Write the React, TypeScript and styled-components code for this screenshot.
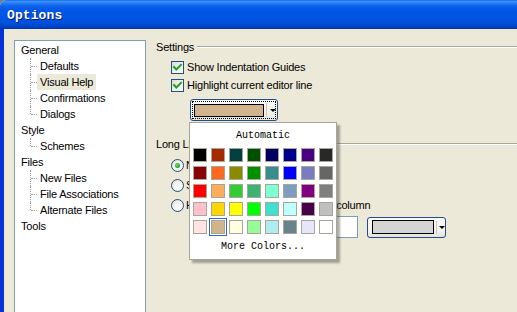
import React from "react";
import styled, { createGlobalStyle, css } from "styled-components";

const Global = createGlobalStyle`
  html, body { margin: 0; padding: 0; background: #7a7a7a; overflow: hidden; }
  #root { width: 517px; height: 312px; }
`;

const UI_FONT = `"Liberation Sans", Arial, sans-serif`;
const MONO_FONT = `"Liberation Mono", "Courier New", monospace`;

const Window = styled.div`
  width: 517px;
  height: 312px;
  display: flex;
  flex-direction: column;
  overflow: hidden;
  border-top-left-radius: 6px;
  background: #ece9d8;
`;

const TitleBar = styled.div`
  flex: none;
  height: 29px;
  display: flex;
  align-items: center;
  padding-left: 7px;
  padding-top: 1px;
  box-sizing: border-box;
  background: linear-gradient(
    to bottom,
    #0a5be6 0px,
    #3d95ff 1px,
    #2a80f6 3px,
    #0d63ea 6px,
    #0057e6 10px,
    #0054e3 18px,
    #0050dc 23px,
    #0046cc 26px,
    #0036ad 29px
  );
  color: #ffffff;
  font-family: ${MONO_FONT};
  font-weight: bold;
  font-size: 13px;
  letter-spacing: 0.1px;
  text-shadow: 1px 1px 0 #0a1c6a;
`;

const Body = styled.div`
  flex: 1;
  display: flex;
  gap: 10px;
  padding: 11px 0 0 10px;
  border-left: 4px solid #0855dd;
  border-image: linear-gradient(to right, #0831d9 0, #1b6bff 30%, #0c5ae8 60%, #0046d5 100%) 1;
  background: #ece9d8;
  min-height: 0;
`;

const Tree = styled.div`
  flex: none;
  width: 132px;
  height: 290px;
  box-sizing: border-box;
  border: 1px solid #7f9db9;
  background: #ffffff;
  padding-top: 1px;
  font-family: ${UI_FONT};
  font-size: 11px;
  letter-spacing: -0.2px;
  color: #000;
`;

const TreeRoot = styled.div`
  height: 16px;
  line-height: 16px;
  padding-left: 6px;
`;

const TreeChild = styled.div<{ $last?: boolean }>`
  position: relative;
  height: 16px;
  line-height: 16px;
  padding-left: 22px;
  &::before {
    content: "";
    position: absolute;
    left: 15px;
    top: 0;
    height: ${(p) => (p.$last ? "8px" : "16px")};
    border-left: 1px dotted #a0a0a0;
  }
  &::after {
    content: "";
    position: absolute;
    left: 16px;
    top: 8px;
    width: 6px;
    border-top: 1px dotted #a0a0a0;
  }
`;

const TreeLabel = styled.span<{ $selected?: boolean }>`
  display: inline-block;
  padding: 0 3px;
  height: 16px;
  ${(p) =>
    p.$selected &&
    css`
      background: #ece9d8;
    `}
`;

const Panel = styled.div`
  flex: 1;
  display: flex;
  flex-direction: column;
  font-family: ${UI_FONT};
  font-size: 11px;
  letter-spacing: -0.2px;
  color: #000;
  min-width: 0;
`;

const SectionHeader = styled.div<{ $mt?: number }>`
  display: flex;
  align-items: center;
  gap: 3px;
  height: 14px;
  margin-top: ${(p) => p.$mt ?? 0}px;
  white-space: nowrap;
`;

const Rule = styled.div`
  flex: 1;
  height: 0;
  border-top: 1px solid #aca899;
  border-bottom: 1px solid #ffffff;
`;

const OptionRow = styled.div<{ $h: number; $mt?: number }>`
  display: flex;
  align-items: center;
  gap: 3px;
  height: ${(p) => p.$h}px;
  margin-top: ${(p) => p.$mt ?? 0}px;
  padding-left: 15px;
  white-space: nowrap;
`;

const OptionText = styled.span<{ $spread?: number }>`
  word-spacing: ${(p) => p.$spread ?? 0}px;
`;

const CheckBox = styled.span`
  position: relative;
  flex: none;
  width: 13px;
  height: 13px;
  box-sizing: border-box;
  border: 1px solid #1c5180;
  background: linear-gradient(135deg, #dcdcd7 0%, #f4f4f0 60%, #ffffff 100%);
  svg {
    position: absolute;
    left: 0;
    top: 0;
  }
`;

const Radio = styled.span<{ $checked?: boolean }>`
  position: relative;
  flex: none;
  width: 13px;
  height: 13px;
  box-sizing: border-box;
  border: 1px solid #1c5180;
  border-radius: 50%;
  background: radial-gradient(circle at 65% 65%, #ffffff 0%, #f4f3ee 50%, #d8d7d0 100%);
  margin-right: -1px;
  ${(p) =>
    p.$checked &&
    css`
      &::after {
        content: "";
        position: absolute;
        left: 3px;
        top: 3px;
        width: 5px;
        height: 5px;
        border-radius: 50%;
        background: radial-gradient(circle at 40% 40%, #5fe35f 0%, #21a121 70%, #1a8a1a 100%);
      }
    `}
`;

const ComboWrap = styled.div<{ $mt?: number; $ml?: number }>`
  position: relative;
  align-self: flex-start;
  margin-top: ${(p) => p.$mt ?? 0}px;
  margin-left: ${(p) => p.$ml ?? 0}px;
`;

const ComboBox = styled.div<{ $w: number; $h: number; $focused?: boolean }>`
  position: relative;
  width: ${(p) => p.$w}px;
  height: ${(p) => p.$h}px;
  box-sizing: border-box;
  border: 1px solid #1f4e86;
  border-radius: 3px;
  background: linear-gradient(to bottom, #fbfbf9 0%, #f2f1ec 70%, #e4e2da 100%);
  display: flex;
  align-items: center;
  padding-left: 3px;
  ${(p) =>
    p.$focused &&
    css`
      &::after {
        content: "";
        position: absolute;
        inset: 1px;
        border: 1px dotted #000;
      }
    `}
`;

const ComboSwatch = styled.span<{ $w: number; $h: number; $ml?: number }>`
  flex: none;
  width: ${(p) => p.$w}px;
  height: ${(p) => p.$h}px;
  margin-left: ${(p) => p.$ml ?? 0}px;
  box-sizing: border-box;
  border: 1px solid #000;
`;

const ComboArrow = styled.span`
  flex: 1;
  align-self: stretch;
  display: flex;
  align-items: center;
  justify-content: center;
  margin: 3px 0 3px 2px;
  border-left: 1px solid #c8c6bc;
  &::after {
    content: "";
    width: 0;
    height: 0;
    border-left: 3px solid transparent;
    border-right: 3px solid transparent;
    border-top: 3px solid #000;
    margin-left: 1px;
  }
`;

const Popup = styled.div`
  position: absolute;
  left: -1px;
  top: 23px;
  z-index: 10;
  width: 148px;
  box-sizing: border-box;
  background: #ffffff;
  border: 1px solid #a8a69a;
  box-shadow: 3px 3px 2px rgba(70, 70, 60, 0.45);
  display: flex;
  flex-direction: column;
  align-items: stretch;
  font-family: ${MONO_FONT};
  font-size: 10px;
  letter-spacing: 0;
  color: #000;
`;

const PopupItem = styled.div<{ $h: number }>`
  height: ${(p) => p.$h}px;
  display: flex;
  align-items: center;
  justify-content: center;
`;

const SwatchGrid = styled.div`
  display: grid;
  grid-template-columns: repeat(8, 14px);
  grid-auto-rows: 14px;
  gap: 4px;
  padding: 0 3px;
`;

const Swatch = styled.span<{ $selected?: boolean }>`
  box-sizing: border-box;
  width: 14px;
  height: 14px;
  border: 1px solid #a8a69a;
  ${(p) =>
    p.$selected &&
    css`
      outline: 1px solid #316ac5;
      outline-offset: 1px;
    `}
`;

const FieldRow = styled.div`
  display: flex;
  align-items: center;
  gap: 9px;
  height: 22px;
  margin-top: 1px;
  padding-left: 34px;
  white-space: nowrap;
`;

const FieldLabel = styled.span`
  width: 99px;
  overflow: hidden;
`;

const TextField = styled.span`
  width: 60px;
  height: 22px;
  box-sizing: border-box;
  border: 1px solid #7f9db9;
  background: #ffffff;
`;

const palette: string[][] = [
  ["#000000", "#A52A00", "#004040", "#005000", "#000060", "#00008B", "#4B0082", "#282828"],
  ["#8B0000", "#FF6820", "#8B8B00", "#009000", "#388E8E", "#0000FF", "#7B7BC0", "#666666"],
  ["#FF0000", "#FFAD5B", "#32CD32", "#3CB371", "#7FFFD4", "#7D9EC0", "#800080", "#7F7F7F"],
  ["#FFC0CB", "#FFD700", "#FFFF00", "#00FF00", "#40E0D0", "#C0FFFF", "#480048", "#C0C0C0"],
  ["#FFE4E1", "#D2B48C", "#FFFFE0", "#98FB98", "#AFEEEE", "#68838B", "#E6E6FA", "#FFFFFF"],
];

type Node = { label: string; children?: string[] };
const tree: Node[] = [
  { label: "General", children: ["Defaults", "Visual Help", "Confirmations", "Dialogs"] },
  { label: "Style", children: ["Schemes"] },
  { label: "Files", children: ["New Files", "File Associations", "Alternate Files"] },
  { label: "Tools" },
];

const Check = () => (
  <svg width="11" height="11" viewBox="0 0 11 11">
    <path d="M2 5 L4.3 7.5 L9 2.8" fill="none" stroke="#21a121" strokeWidth="2" strokeLinecap="square" />
  </svg>
);

export default function App() {
  return (
    <>
      <Global />
      <Window>
        <TitleBar>Options</TitleBar>
        <Body>
          <Tree>
            {tree.map((n) => (
              <React.Fragment key={n.label}>
                <TreeRoot>{n.label}</TreeRoot>
                {n.children?.map((c, i) => (
                  <TreeChild key={c} $last={i === n.children!.length - 1}>
                    <TreeLabel $selected={c === "Visual Help"}>{c}</TreeLabel>
                  </TreeChild>
                ))}
              </React.Fragment>
            ))}
          </Tree>
          <Panel>
            <SectionHeader>
              Settings
              <Rule />
            </SectionHeader>
            <OptionRow $h={18} $mt={4}>
              <CheckBox>
                <Check />
              </CheckBox>
              Show Indentation Guides
            </OptionRow>
            <OptionRow $h={18}>
              <CheckBox>
                <Check />
              </CheckBox>
              Highlight current editor line
            </OptionRow>
            <ComboWrap $mt={5} $ml={34}>
              <ComboBox $w={88} $h={22} $focused>
                <ComboSwatch $w={70} $h={13} style={{ background: "#D2B48C" }} />
                <ComboArrow />
              </ComboBox>
              <Popup>
                <PopupItem $h={25}>Automatic</PopupItem>
                <SwatchGrid>
                  {palette.flat().map((c, i) => (
                    <Swatch key={i} $selected={i === 33} style={{ background: c }} />
                  ))}
                </SwatchGrid>
                <PopupItem $h={25}>More Colors...</PopupItem>
              </Popup>
            </ComboWrap>
            <SectionHeader $mt={16}>
              Long Lines
              <Rule />
            </SectionHeader>
            <OptionRow $h={20} $mt={4}>
              <Radio $checked />
              <OptionText>No long line indicator</OptionText>
            </OptionRow>
            <OptionRow $h={20}>
              <Radio />
              <OptionText>Show a line at column</OptionText>
            </OptionRow>
            <OptionRow $h={20}>
              <Radio />
              <OptionText $spread={3.4}>Highlight background beyond column</OptionText>
            </OptionRow>
            <FieldRow>
              <FieldLabel>Column number:</FieldLabel>
              <TextField />
              <ComboBox $w={79} $h={21}>
                <ComboSwatch $w={62} $h={14} $ml={1} style={{ background: "#D4D4D4" }} />
                <ComboArrow />
              </ComboBox>
            </FieldRow>
          </Panel>
        </Body>
      </Window>
    </>
  );
}
